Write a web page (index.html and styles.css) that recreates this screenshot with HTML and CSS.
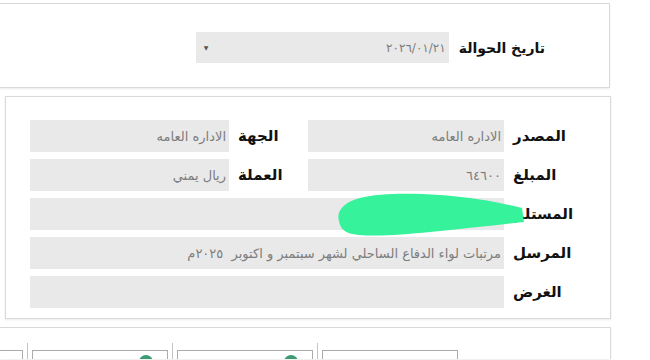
FILE: index.html
```html
<!DOCTYPE html>
<html lang="ar" dir="rtl">
<head>
  <meta charset="UTF-8">
  <title>تفاصيل الحوالة</title>
  <link rel="stylesheet" href="styles.css">
</head>
<body>
  <section class="panel panel-date">
    <label class="date-label">تاريخ الحوالة</label>
    <div class="field date-field">
      <span dir="ltr">٢٠٢٦/٠١/٢١</span>
      <span class="caret">▼</span>
    </div>
  </section>

  <section class="panel panel-info">
    <div class="info-grid">
      <label class="lbl">المصدر</label>
      <div class="field">الاداره العامه</div>
      <label class="lbl">الجهة</label>
      <div class="field">الاداره العامه</div>

      <label class="lbl">المبلغ</label>
      <div class="field">٦٤٦٠٠</div>
      <label class="lbl">العملة</label>
      <div class="field">ريال يمني</div>

      <label class="lbl">المستلم</label>
      <div class="field wide"></div>

      <label class="lbl">المرسل</label>
      <div class="field wide">مرتبات لواء الدفاع الساحلي لشهر سبتمبر و اكتوبر&nbsp; ٢٠٢٥م</div>

      <label class="lbl">الغرض</label>
      <div class="field wide"></div>
    </div>

    <!-- redaction mark over the receiver name -->
    <svg class="blob" width="200" height="50" viewBox="0 0 200 50">
      <path d="M 9 32 C 6 22, 14 13, 30 9 C 50 4, 80 4, 110 6 C 140 8, 168 13, 192 19 L 194 33 C 164 36, 132 40, 100 43 C 70 46, 40 48, 22 45 C 13 43, 10 38, 9 32 Z" fill="#35f29b"/>
    </svg>
  </section>

  <section class="panel panel-actions">
    <div class="action-box"></div>
    <span class="sep"></span>
    <div class="action-box"><span class="dot"></span></div>
    <span class="sep"></span>
    <div class="action-box"><span class="dot"></span></div>
    <span class="sep"></span>
    <div class="action-box"></div>
  </section>
</body>
</html>
```

FILE: styles.css
```css
body {
  margin: 0;
  padding: 0;
  width: 650px;
  height: 360px;
  overflow: hidden;
  background-color: #fff;
  font-family: "DejaVu Sans", "Noto Sans", sans-serif;
}

.panel {
  background-color: #fff;
  border: 1px solid #d9d9d9;
  box-shadow: 0 1px 2px rgba(0, 0, 0, 0.08);
}

/* date row */
.panel-date {
  margin: 3px 40px 0 0;
  border-left: none;
  padding: 28px 64px 24px 0;
  display: flex;
  align-items: center;
  gap: 10px;
}

.date-label {
  white-space: nowrap;
  font-size: 14px;
  font-weight: bold;
  color: #111;
}

.field {
  height: 32px;
  box-sizing: border-box;
  background-color: #e9e9e9;
  color: #7d7d7d;
  font-size: 13px;
  padding: 0 3px;
  display: flex;
  align-items: center;
  white-space: nowrap;
  overflow: hidden;
}

.date-field {
  width: 253px;
  height: 31px;
  font-size: 12px;
  justify-content: space-between;
}

.caret {
  font-size: 6px;
  color: #555;
  padding-left: 5px;
}

/* details */
.panel-info {
  position: relative;
  margin: 8px 39px 0 5px;
  padding: 23px 27px 10px 24px;
}

.info-grid {
  display: grid;
  grid-template-columns: 79px 196px 79px 1fr;
  grid-auto-rows: 32px;
  row-gap: 7px;
}

.lbl {
  display: flex;
  align-items: center;
  justify-content: flex-end;
  padding-left: 9px;
  white-space: nowrap;
  font-size: 15px;
  font-weight: bold;
  color: #111;
}

.wide {
  grid-column: 2 / 5;
}

.blob {
  position: absolute;
  left: 324px;
  top: 92px;
}

/* buttons row */
.panel-actions {
  margin: 8px 39px 0 0;
  border-left: none;
  border-bottom: none;
  padding: 22px 152px 0 0;
  height: 32px;
  box-sizing: border-box;
  overflow: hidden;
  display: flex;
  align-items: flex-start;
}

.action-box {
  flex: none;
  width: 136px;
  height: 30px;
  box-sizing: border-box;
  border: 1px solid #ababab;
  display: flex;
}

.sep {
  flex: none;
  width: 1px;
  height: 34px;
  margin: -7px 4px 0;
  background-color: #c4c4c4;
}

.dot {
  width: 14px;
  height: 14px;
  margin: 4px 14px 0 0;
  border-radius: 50%;
  background-color: #3c9d74;
}
```
